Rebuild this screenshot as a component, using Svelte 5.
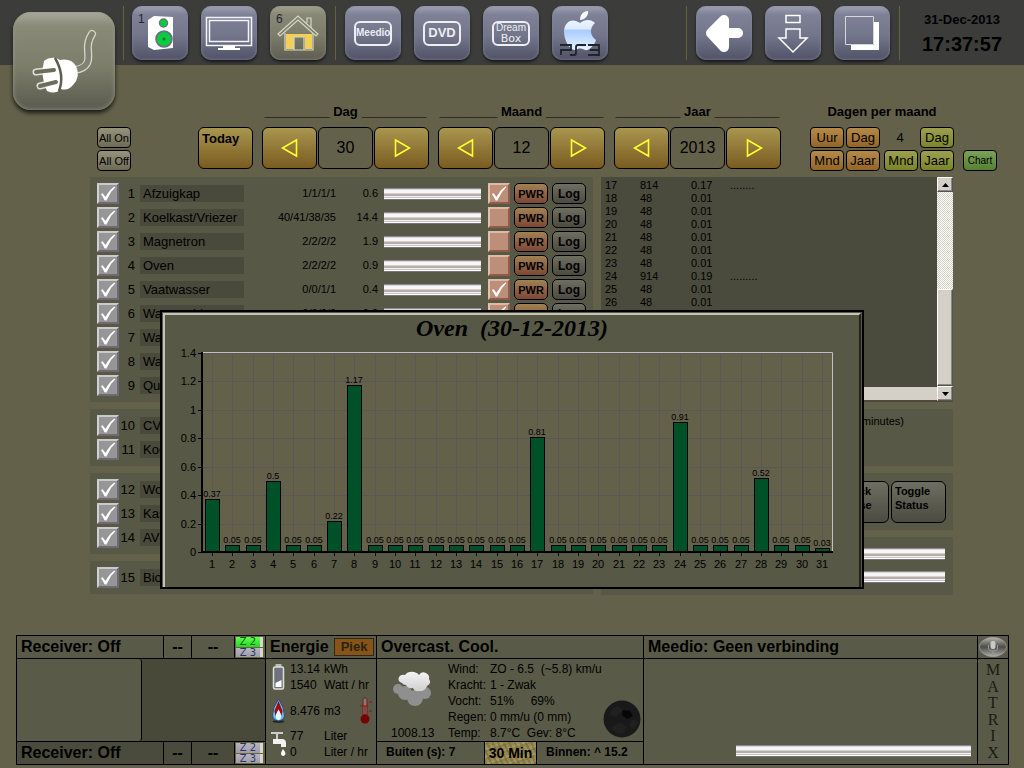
<script>
	const meters = [
		[
			{ id: 1, name: 'Afzuigkap', count: '1/1/1/1', value: '0.6', power: true },
			{ id: 2, name: 'Koelkast/Vriezer', count: '40/41/38/35', value: '14.4', power: false },
			{ id: 3, name: 'Magnetron', count: '2/2/2/2', value: '1.9', power: false },
			{ id: 4, name: 'Oven', count: '2/2/2/2', value: '0.9', power: false },
			{ id: 5, name: 'Vaatwasser', count: '0/0/1/1', value: '0.4', power: true },
			{ id: 6, name: 'Wasmachine', count: '0/0/0/0', value: '0.0', power: true },
			{ id: 7, name: 'Wand' },
			{ id: 8, name: 'Warm' },
			{ id: 9, name: 'Quad' }
		],
		[
			{ id: 10, name: 'CV' },
			{ id: 11, name: 'Kook' }
		],
		[
			{ id: 12, name: 'Wok' },
			{ id: 13, name: 'Kast' },
			{ id: 14, name: 'AV' }
		],
		[
			{ id: 15, name: 'Bios' }
		]
	]

	const log = [
		[17, 814, '0.17', '........'],
		[18, 48, '0.01', ''],
		[19, 48, '0.01', ''],
		[20, 48, '0.01', ''],
		[21, 48, '0.01', ''],
		[22, 48, '0.01', ''],
		[23, 48, '0.01', ''],
		[24, 914, '0.19', '.........'],
		[25, 48, '0.01', ''],
		[26, 48, '0.01', '']
	]

	const peaks = { 1: 0.37, 4: 0.5, 7: 0.22, 8: 1.17, 17: 0.81, 24: 0.91, 28: 0.52, 31: 0.03 }
	const bars = []
	for (let day = 1; day <= 31; day++) {
		bars.push({ day, value: peaks[day] ?? 0.05 })
	}
	const ticks = [0, 0.2, 0.4, 0.6, 0.8, 1, 1.2, 1.4]
	const x_of = (day) => Math.round(47 + (day - 1) * 20.33)
	const y_of = (value) => Math.round(211 - value * 142.5)

	const weather = [
		['Wind:', 'ZO - 6.5\u00a0 (~5.8) km/u'],
		['Kracht:', '1 - Zwak'],
		['Vocht:', '51%\u00a0\u00a0\u00a0\u00a0 69%'],
		['Regen:', '0 mm/u (0 mm)'],
		['Temp:', '8.7°C\u00a0 Gev: 8°C']
	]

	let date = $state([
		{ label: 'Dag', line: '_________', value: 30 },
		{ label: 'Maand', line: '________', value: 12 },
		{ label: 'Jaar', line: '_________', value: 2013 }
	])
</script>

{#snippet arrow(left)}
	<svg width="18" height="20" viewBox="0 0 18 20" fill="none" stroke="#ffff2e" stroke-width="1.6">
		{#if left}
		<path d="M15.5 2v16L1.5 10z" />
		{:else}
		<path d="M2.5 2v16l14-8z" />
		{/if}
	</svg>
{/snippet}

{#snippet zones(active)}
	<div class="zones">
		<button class="zone" class:active>Z 2</button>
		<button class="zone">Z 3</button>
	</div>
{/snippet}

<div class="page">
<header>
	<button class="plug" aria-label="Energie">
		<svg width="102" height="98" viewBox="0 0 102 98">
			<g fill="none" stroke-linecap="round" stroke-linejoin="round">
				<path d="M62 58C76 56 76 48 75 39C74 30 77 25 79 22" stroke="#d8d8cb" stroke-width="8" />
				<path d="M61 58C76 56 76 48 75 39C74 30 77 25 79 22" stroke="#828272" stroke-width="5.5" />
				<path d="M23 60l18-2M27 74l16-4" stroke="#e0e0d4" stroke-width="7" />
				<path d="M31 49Q36 45 43 46L47 48Q58 46 63 54Q68 65 60 73Q55 79 48 77Q42 83 34 79Q27 64 31 49z" fill="#fff" />
				<path d="M23 60l18-2M27 74l16-4" stroke="#6c6d5c" stroke-width="4" />
			</g>
			<path d="M42 46Q52 63 46 79" fill="none" stroke="#5d5e50" stroke-width="2.5" />
		</svg>
	</button>
	<nav class="group">
		<button class="tile" aria-label="Audio">
			<span class="count">1</span>
			<svg width="56" height="54" viewBox="0 0 56 54">
				<path d="M16 14l6-4 19 1v31l-19 2-6-3z" fill="#fff" />
				<circle cx="31.500" cy="17" r="4" fill="#00d13a" stroke="#6b7382" stroke-width="1.5" />
				<circle cx="32" cy="33" r="7.800" fill="#00d13a" stroke="#6b7382" stroke-width="2" />
				<circle cx="32" cy="33" r="1.500" fill="#456" />
			</svg>
		</button>
		<button class="tile" aria-label="TV">
			<svg width="56" height="54" viewBox="0 0 56 54">
				<g fill="none" stroke="#f4f4fa">
					<rect x="5.500" y="11.500" width="45" height="28" stroke-width="1.5" />
					<rect x="8.500" y="14.500" width="39" height="21" stroke-width="1.5" />
				</g>
				<path d="M22 40h12v2h5v2H17v-2h5z" fill="#fff" />
			</svg>
		</button>
		<button class="tile olive" aria-label="Huis">
			<span class="count">6</span>
			<svg width="56" height="54" viewBox="0 0 56 54">
				<path d="M16 28h26v15h-7V31h-11v12h-8z" fill="#f3cf59" />
				<g fill="none" stroke="#d7d7c5" stroke-width="1.2">
					<path d="M8 28L28 10l20 18-2 2L28 14 10 30z" />
					<path d="M37 17v-5h4v10M15 27v17h28V27M24 44V31h10v13" />
				</g>
			</svg>
		</button>
	</nav>
	<nav class="group">
		<button class="tile"><span class="plate">Meedio</span></button>
		<button class="tile"><span class="plate dvd">DVD</span></button>
		<button class="tile"><span class="plate dream">Dream<b>Box</b></span></button>
		<button class="tile" aria-label="PS3">
			<svg width="56" height="54" viewBox="0 0 56 54">
				<defs>
					<linearGradient id="apple" x1="0" y1="0" x2="0" y2="1">
						<stop offset="0" stop-color="#fff" />
						<stop offset=".45" stop-color="#dcebff" />
						<stop offset=".5" stop-color="#a9ccff" />
						<stop offset="1" stop-color="#e8f3ff" />
					</linearGradient>
				</defs>
				<path d="M28 14C28 8 32 5 36 5C37 9 33 14 28 14zM28 17C33 13 39 13 43 17C37 22 38 30 44 34C42 40 37 45 33 44C29 42 27 42 23 44C17 44 12 33 12 26C12 16 20 11 28 17z" fill="url(#apple)" />
				<path d="M8 39h11v5H9v5M34 39h-8q-2 0-2 2v6q0 2-2 2h-4M36 39h11v10H36M38 44h9" fill="none" stroke="#22242a" stroke-width="1.8" />
			</svg>
		</button>
	</nav>
	<nav class="group right">
		<button class="tile" aria-label="Terug">
			<svg width="56" height="54" viewBox="0 0 56 54" stroke="#fff" stroke-linecap="round" stroke-linejoin="round">
				<path d="M28 14L15 27l13 14z" fill="#fff" stroke-width="10" />
				<path d="M20 27h22" stroke-width="10" />
			</svg>
		</button>
		<button class="tile" aria-label="Omlaag">
			<svg width="56" height="54" viewBox="0 0 56 54" fill="none" stroke="#fff" stroke-width="1.5">
				<path d="M21 9.500h14v7H21zM21 23h14v9h7L28 46 14 32h7z" />
			</svg>
		</button>
		<button class="tile" aria-label="Vensters">
			<svg width="56" height="54" viewBox="0 0 56 54">
				<path d="M17 39h23V16h5v28H17z" fill="#fff" />
				<path d="M11.500 10.500h28v28h-28z" fill="none" stroke="#d5d5dc" />
			</svg>
		</button>
	</nav>
	<div class="clock">
		<div>31-Dec-2013</div>
		<div class="time">17:37:57</div>
	</div>
</header>

<section class="controls">
	<div class="pair">
		<button class="mini tiny">All On</button>
		<button class="mini tiny">All Off</button>
	</div>
	<button class="gold today">Today</button>
	{#each date as part}
	<div class="picker">
		<label for={part.label}>{part.line} {part.label} {part.line}</label>
		<div class="stepper">
			<button class="gold" aria-label="Vorige" onclick={() => part.value--}>{@render arrow(true)}</button>
			<input id={part.label} bind:value={part.value}>
			<button class="gold" aria-label="Volgende" onclick={() => part.value++}>{@render arrow(false)}</button>
		</div>
	</div>
	{/each}
	<div class="ranges">
		<div class="heading">Dagen per maand</div>
		<div class="range-grid">
			<button class="mini orange">Uur</button>
			<button class="mini orange">Dag</button>
			<span class="four">4</span>
			<button class="mini lime">Dag</button>
			<span></span>
			<button class="mini orange">Mnd</button>
			<button class="mini orange">Jaar</button>
			<button class="mini lime shift">Mnd</button>
			<button class="mini lime">Jaar</button>
			<button class="mini green">Chart</button>
		</div>
	</div>
</section>

<main>
	<div class="column">
		{#each meters as panel}
		<div class="panel list">
			{#each panel as meter}
			<div class="meter">
				<input type="checkbox" class="check" id="meter-{meter.id}" checked>
				<label for="meter-{meter.id}"><span class="number">{meter.id}</span><span class="name">{meter.name}</span></label>
				{#if meter.count}
				<span class="counts">{meter.count}</span>
				<span class="value">{meter.value}</span>
				<div class="tube"></div>
				<input type="checkbox" class="check pink" aria-label="Power {meter.name}" checked={meter.power}>
				<button class="mini pwr">PWR</button>
				<button class="mini log">Log</button>
				{/if}
			</div>
			{/each}
		</div>
		{/each}
	</div>
	<div class="column">
		<div class="panel history">
			<div class="view">
				<table>
				<tbody>
					{#each log as row}
					<tr>
						{#each row as cell}
						<td>{cell}</td>
						{/each}
					</tr>
					{/each}
				</tbody>
				</table>
				<div class="hbar"></div>
			</div>
			<div class="vbar">
				<button aria-label="Omhoog"><svg width="7" height="4"><path d="M0 4h7L3.500 0z" /></svg></button>
				<div class="thumb"></div>
				<button aria-label="Omlaag"><svg width="7" height="4"><path d="M0 0h7L3.500 4z" /></svg></button>
			</div>
		</div>
		<div class="panel note">(minutes)</div>
		<div class="panel actions">
			<button class="grey">Check<br>House</button>
			<button class="grey">Toggle<br>Status</button>
		</div>
		<div class="panel tubes">
			<div class="tube"></div>
			<div class="tube"></div>
		</div>
	</div>
</main>

<div class="dialog" role="dialog" aria-labelledby="chart-title">
	<div class="bevel">
		<h1 id="chart-title">Oven&nbsp; (30-12-2013)</h1>
		<svg class="chart" viewBox="0 0 694 246">
			<rect x="37" y="11" width="631" height="200" class="plot" />
			{#each ticks as tick}
			<path d="M37 {y_of(tick) + 0.5}H668" class="grid" />
			<path d="M33 {y_of(tick) + 0.5}H37" class="axis" />
			<text x="31" y={y_of(tick) + 4} text-anchor="end">{tick}</text>
			{/each}
			{#each bars as bar}
			<path d="M{x_of(bar.day) + 0.5} 11V211" class="grid" />
			<path d="M{x_of(bar.day) + 0.5} 211V215" class="axis" />
			{/each}
			<path d="M37 11.500H667.500V211" class="edge" />
			{#each bars as bar}
			<rect x={x_of(bar.day) - 6.5} y={y_of(bar.value) + 0.5} width="14" height={211 - y_of(bar.value)} class="bar" />
			<text x={x_of(bar.day)} y={y_of(bar.value) - 2} class="small" text-anchor="middle">{bar.value}</text>
			<text x={x_of(bar.day)} y="227" text-anchor="middle">{bar.day}</text>
			{/each}
			<path d="M37 11V211H668" class="axis thick" />
		</svg>
	</div>
</div>

<footer>
	<div class="receiver first">
		<span class="title">Receiver: Off</span><span class="dash">--</span><span class="dash wide">--</span>
		{@render zones(true)}
	</div>
	<div class="screens">
		<div class="near"></div>
	</div>
	<div class="receiver second">
		<span class="title">Receiver: Off</span><span class="dash">--</span><span class="dash wide">--</span>
		{@render zones(false)}
	</div>

	<div class="title energy-title">Energie <button class="piek">Piek</button></div>
	<div class="energy">
		<div class="usage">
			<svg width="12" height="26" viewBox="0 0 12 26">
				<path d="M3 0h6v3H3z" fill="#bbb" />
				<rect x="1" y="3" width="10" height="22" rx="1.500" fill="#70717f" stroke="#deded8" stroke-width="1.5" />
				<path d="M3 19l6-3v7H3z" fill="#fff" />
			</svg>
			<div>
				<p><span>13.14</span>kWh</p>
				<p><span>1540</span>Watt / hr</p>
			</div>
		</div>
		<div class="usage">
			<svg width="14" height="26" viewBox="0 0 14 26">
				<ellipse cx="7" cy="23.500" rx="6" ry="1.500" fill="#22261f" />
				<path d="M7 1Q13 10 13 17Q13 22 7 23Q1 22 1 17Q1 10 7 1z" fill="#68bfe8" stroke="#33427c" />
				<path d="M7 3L11 13 10 18 7 11 4 18 3 13z" fill="#a50608" />
				<path d="M7 12Q11 17 9 21Q7 23 5 21Q3 17 7 12z" fill="#e3f8ff" />
			</svg>
			<p><span>8.476</span>m3</p>
			<svg class="thermo" width="12" height="27" viewBox="0 0 12 27">
				<path d="M3 2q2-3 4 0v16H3z" fill="#8d7670" stroke="#6d2020" />
				<path d="M5 9v12M0 9h8M9 5h3M9 14h3" stroke="#8f1515" />
				<circle cx="5" cy="22" r="4.500" fill="#780000" />
			</svg>
		</div>
		<div class="usage">
			<svg width="15" height="26" viewBox="0 0 15 26">
				<path d="M0 2h12M6 2v6" stroke="#ccc" stroke-width="2" />
				<path d="M2 8h9q4 0 4 4v4h-5v-3H2z" fill="#f2f2ee" />
				<path d="M12 18q5 6 0 7q-4-1 0-7z" fill="#fff" />
			</svg>
			<div>
				<p><span>77</span>Liter</p>
				<p><span>0</span>Liter / hr</p>
			</div>
		</div>
	</div>

	<div class="title weather-title">Overcast. Cool.</div>
	<div class="weather">
		<div class="sky">
			<svg width="42" height="38" viewBox="0 0 42 38">
				<defs>
					<linearGradient id="cloud" x1="0" y1="0" x2="0" y2="1">
						<stop offset="0" stop-color="#f4f4f4" />
						<stop offset="1" stop-color="#cfcfcf" />
					</linearGradient>
				</defs>
				<g fill="#8f8f8f">
					<circle cx="7" cy="18" r="5" /><circle cx="14" cy="22" r="7" />
					<circle cx="24" cy="27" r="8" /><circle cx="34" cy="22" r="6" />
				</g>
				<path d="M11 12Q6 10 8 6Q10 3 14 4Q17 0 23 1Q27 2 28 4Q30 0 35 2Q39 4 38 8Q41 12 36 15Q34 21 28 20Q24 21 22 17Q17 18 15 14Q12 14 11 12z" fill="url(#cloud)" />
			</svg>
			<span>1008.13</span>
		</div>
		<dl>
			{#each weather as [label, text]}
			<dt>{label}</dt>
			<dd>{text}</dd>
			{/each}
		</dl>
		<svg class="moon" width="38" height="38" viewBox="0 0 38 38">
			<circle cx="19" cy="19" r="18.500" fill="#191919" />
			<path d="M6 15q3-8 9-9l5 4-7 7zM8 28l9-6 7 5-4 7q-8 0-12-6zM29 19l6 3-4 8-5-4z" fill="#202020" />
			<path d="M20 10l7 1 3 5-6 3-5-4z" fill="#060606" />
		</svg>
	</div>
	<div class="temps">
		<span>Buiten (s): 7</span>
		<button>30 Min</button>
		<span>Binnen: ^ 15.2</span>
	</div>

	<div class="title player-title">Meedio: Geen verbinding</div>
	<div class="player"><div class="tube"></div></div>

	<button class="mic" aria-label="Microfoon">
		<svg width="28" height="20" viewBox="0 0 28 20">
			<defs>
				<linearGradient id="mic" x1="0" y1="0" x2="0" y2="1">
					<stop offset="0" stop-color="#b5b5ad" />
					<stop offset=".5" stop-color="#4c4c48" />
					<stop offset="1" stop-color="#b0b0a8" />
				</linearGradient>
			</defs>
			<ellipse cx="14" cy="10" rx="13.500" ry="9.700" fill="url(#mic)" stroke="#aaa" stroke-width=".6" />
			<rect x="11.500" y="4" width="5" height="8" rx="2" fill="#c9c9c5" />
			<path d="M9.500 8v3q0 3 4.500 3t4.500-3V8M14 14v3" fill="none" stroke="#999" />
		</svg>
	</button>
	<div class="matrix">
		{#each 'MATRIX' as letter}
		<span>{letter}</span>
		{/each}
	</div>
</footer>
</div>

<style>
:global(body) {
	margin: 0;
	background: #64614b;
}
* {
	box-sizing: border-box;
}
.page {
	position: relative;
	min-height: 100vh;
	display: flex;
	flex-direction: column;
	background: #64614b;
	color: #000;
	font: 13px/16px "Liberation Sans", Arial, sans-serif;
}
button, input {
	font: inherit;
	color: inherit;
	padding: 0;
	margin: 0;
	border: 0;
	flex-shrink: 0;
}
button {
	cursor: pointer;
}
svg {
	display: block;
}
p {
	margin: 0;
}

header {
	display: flex;
	align-items: flex-start;
	height: 65px;
	padding-left: 13px;
	background: #3c3d3b;
}
.plug {
	width: 102px;
	height: 98px;
	margin: 12px 8px 0 0;
	border-radius: 18px;
	background: linear-gradient(#acac9d, #898a78 14%, #7c7d6b 55%, #5a5b4e);
	box-shadow: 0 3px 4px #1c1c14, inset 0 0 4px #96978a;
}
.group {
	display: flex;
	gap: 13px;
	height: 54px;
	margin-top: 6px;
	padding: 0 9px 0 8px;
	border-left: 1px solid #67623a;
}
.group + .group {
	padding-left: 9px;
}
.group.right {
	margin-left: auto;
	border-right: 1px solid #67623a;
}
.tile {
	position: relative;
	display: flex;
	align-items: center;
	justify-content: center;
	width: 56px;
	height: 54px;
	border-radius: 10px;
	background: linear-gradient(#a0a2b4, #7f8196 16%, #73758a 55%, #505267);
	box-shadow: 0 2px 3px #18181c, inset 0 0 3px #85879c;
}
.tile.olive {
	background: linear-gradient(#a2a28f, #878875 16%, #7b7c69 55%, #5d5e50);
	box-shadow: 0 2px 3px #18181c, inset 0 0 3px #8e8f7d;
}
.count {
	position: absolute;
	left: 6px;
	top: 5px;
	font-size: 12px;
	color: #26262c;
}
.plate {
	width: 38px;
	height: 25px;
	border: 2px solid #ededf3;
	border-radius: 6px;
	color: #ededf3;
	font: bold 10px/20px "Liberation Sans", Arial, sans-serif;
}
.plate.dvd {
	font-size: 13px;
}
.plate.dream {
	display: grid;
	align-content: center;
	font: 10px/10px "Liberation Sans", Arial, sans-serif;
}
.plate b {
	font: 11px/11px "DejaVu Sans", sans-serif;
}
.clock {
	width: 124px;
	padding-top: 12px;
	text-align: center;
	font-weight: bold;
}
.time {
	font-size: 20px;
	line-height: 32px;
}

.controls {
	display: flex;
	align-items: flex-end;
	margin-top: 38px;
	padding: 0 27px 0 97px;
	height: 68px;
	gap: 9px;
}
.pair {
	display: grid;
	gap: 2px;
	margin-right: 58px;
}
.mini {
	width: 34px;
	height: 21px;
	border: 1px solid #000;
	border-radius: 4px;
	background: linear-gradient(#96937b, #6d6b55);
	font-size: 13px;
	line-height: 16px;
	white-space: nowrap;
}
.mini.tiny {
	font-size: 11px;
}
.mini.orange {
	background: linear-gradient(#b48a4b, #936526);
}
.mini.lime {
	background: linear-gradient(#9ca04e, #7b8529);
}
.mini.green {
	margin-left: 7px;
	background: linear-gradient(#7ba259, #558132);
	font-size: 10px;
}
.gold {
	display: grid;
	place-items: center;
	width: 55px;
	height: 42px;
	border: 1px solid #000;
	border-radius: 6px;
	background: linear-gradient(#a9964f, #7a5b20);
}
.gold.today {
	place-items: start;
	padding: 3px;
	font-weight: bold;
}
.controls > .today, .stepper {
	margin-bottom: 2px;
}
.picker label, .heading {
	display: block;
	text-align: center;
	white-space: nowrap;
	font-weight: bold;
	margin-bottom: 7px;
}
.stepper {
	display: flex;
	gap: 1px;
}
.stepper input {
	width: 55px;
	height: 42px;
	border: 1px solid #000;
	border-radius: 6px;
	background: none;
	text-align: center;
	font-size: 16px;
}
.ranges {
	margin-left: auto;
}
.heading {
	width: 144px;
}
.range-grid {
	display: grid;
	grid-template-columns: 34px 34px 36px 34px 41px;
	gap: 2px;
}
.four {
	text-align: center;
	line-height: 21px;
}
.shift {
	justify-self: end;
}

main {
	display: grid;
	grid-template-columns: 503fr 352fr;
	gap: 8px;
	margin: 6px 71px 0 90px;
}
.column {
	display: flex;
	flex-direction: column;
	gap: 7px;
}
.panel {
	background: #575845;
}
.list {
	padding: 6px 7px 3px;
}
.meter {
	display: flex;
	align-items: flex-start;
	height: 24px;
}
.meter label {
	display: flex;
	margin-right: auto;
}
.number {
	width: 16px;
	text-align: right;
	line-height: 21px;
}
.name {
	width: 104px;
	height: 17px;
	margin: 2px 0 0 5px;
	padding-left: 3px;
	background: #494a3b;
	line-height: 17px;
}
.check {
	appearance: none;
	display: grid;
	place-items: center;
	width: 22px;
	height: 21px;
	border: 2px solid;
	border-color: #c9c9c9 #6c6c70 #6c6c70 #d0d0d0;
	background: #969698;
}
.check:checked::before {
	content: "";
	width: 16px;
	height: 15px;
	background: #fff;
	clip-path: polygon(6% 54%, 17% 48%, 34% 74%, 62% 28%, 90% 4%, 96% 9%, 68% 42%, 40% 96%, 30% 96%);
}
.check.pink {
	border-color: #deb9a8 #8e5d48 #8e5d48 #e2bfae;
	background: #bd8e78;
}
.counts, .value {
	font-size: 11px;
	line-height: 20px;
}
.value {
	width: 42px;
	text-align: right;
}
.tube {
	width: 97px;
	height: 12px;
	background: linear-gradient(#8b8991 0 1px, #d9d5db 1px 2px, #f8f5f7 2px 5px, #d5cfce 5px 6px, #b4aea8 6px 8px, #f2eef0 8px 9px, #c9c4c2 9px 10px, #fff 10px 11px, #77757c 11px);
}
.meter .tube {
	margin: 5px 7px 0 6px;
}
.meter .mini {
	margin: 0 0 0 4px;
	border-radius: 5px;
	font-weight: bold;
}
.mini.pwr {
	background: linear-gradient(#a18154, #7d4735);
	font-size: 11px;
}
.mini.log {
	background: linear-gradient(#6e6e62, #4b4b41);
	font-size: 12px;
}

.history {
	display: flex;
	height: 225px;
	background: #4a4b3c;
}
.view {
	flex: 1;
	display: flex;
	flex-direction: column;
	justify-content: space-between;
	padding: 2px 0 2px;
}
.hbar {
	height: 13px;
	background: #d4d0c8;
}
table {
	border-collapse: collapse;
	table-layout: fixed;
	width: 100%;
	font-size: 11px;
	line-height: 13px;
}
td {
	padding: 0 0 0 4px;
	height: 13px;
}
td:nth-child(1) {
	width: 35px;
}
td:nth-child(2) {
	width: 51px;
}
td:nth-child(3) {
	width: 39px;
}
.vbar {
	display: flex;
	flex-direction: column;
	width: 16px;
	margin-bottom: 1px;
	background: repeating-conic-gradient(#fff 0 25%, #d4d0c8 0 50%) 0 0 / 2px 2px;
}
.vbar button, .thumb {
	border: 1px solid;
	border-color: #fff #55554f #55554f #fff;
	background: #d4d0c8;
	box-shadow: inset -1px -1px #888;
}
.vbar button {
	display: grid;
	place-items: center;
	height: 15px;
}
.thumb {
	height: 97px;
	margin-top: auto;
}
.note {
	height: 57px;
	padding: 4px 49px;
	text-align: right;
	font-size: 11px;
}
.actions {
	display: flex;
	justify-content: flex-end;
	gap: 2px;
	height: 57px;
	padding: 8px 7px;
}
.grey {
	width: 55px;
	height: 42px;
	padding: 2px 3px 10px;
	border: 1px solid #000;
	border-radius: 6px;
	background: linear-gradient(#6e6e62, #4b4b41);
	font: bold 11px/14px "Liberation Sans", Arial, sans-serif;
	text-align: left;
}
.tubes {
	display: grid;
	gap: 11px;
	padding: 11px 8px 12px 15px;
}
.tubes .tube {
	width: 100%;
}

.dialog {
	position: absolute;
	top: 310px;
	left: 0;
	right: 0;
	width: 704px;
	margin: 0 auto;
	padding: 1px 1px 0;
	border: 2px solid #000;
	background: #575845;
}
.bevel {
	border: 2px solid;
	border-color: #c4c4b6 #22221a transparent #c4c4b6;
	border-bottom: 0;
}
h1 {
	margin: 0;
	text-align: center;
	font: italic bold 24px/26px "Liberation Serif", "Times New Roman", serif;
}
.chart {
	width: 100%;
	font-size: 11px;
}
.small {
	font-size: 9px;
}
.plot {
	fill: #64614b;
}
.grid {
	stroke: #5a5758;
}
.axis {
	fill: none;
	stroke: #000;
}
.thick {
	stroke-width: 2px;
}
.edge {
	fill: none;
	stroke: #c0c0c0;
}
.bar {
	fill: #005028;
	stroke: #000;
}

footer {
	display: grid;
	grid-template-columns: 248px 110px 266px 1fr 30px;
	grid-template-rows: 22px 82px 22px;
	grid-template-areas:
		"first energy-title weather-title player-title mic"
		"screens energy weather player matrix"
		"second energy temps player matrix";
	gap: 1px;
	margin: auto 15px 3px 16px;
	padding: 1px;
	background: #000;
	font-size: 12px;
}
footer > * {
	background: #5a5a48;
}
.title {
	padding-left: 4px;
	font-size: 16px;
	font-weight: bold;
	line-height: 21px;
	white-space: nowrap;
}
.receiver {
	display: flex;
}
.receiver .title {
	flex: 1;
}
.first {
	grid-area: first;
}
.second {
	grid-area: second;
	background: #4a4b3c;
}
.dash {
	width: 28px;
	border-left: 1px solid #000;
	text-align: center;
	font-size: 16px;
	font-weight: bold;
	line-height: 22px;
}
.dash.wide {
	width: 43px;
}
.zones {
	display: grid;
	gap: 1px;
	width: 31px;
	padding: 1px 2px 1px 1px;
	border-left: 1px solid #000;
	background: #6b6436;
}
.zone {
	border-right: 3px solid #d5d5dc;
	background: linear-gradient(#b5b5c0, #9d9da9);
	color: #303066;
	font: 10px/9px "DejaVu Sans", sans-serif;
}
.zone.active {
	background: linear-gradient(#5dff55, #28d51f);
	color: #075c07;
}
.energy-title {
	grid-area: energy-title;
	display: flex;
	justify-content: space-between;
	padding-right: 2px;
}
.weather-title {
	grid-area: weather-title;
}
.player-title {
	grid-area: player-title;
}
.piek {
	width: 40px;
	height: 18px;
	margin-top: 2px;
	border: 1px solid #2c2a20;
	background: #885315;
	color: #2a2414;
	font: bold 13px/16px "Liberation Sans", Arial, sans-serif;
}
.mic {
	grid-area: mic;
	display: grid;
	place-items: center;
}
.screens {
	grid-area: screens;
	background: #484939;
}
.near {
	width: 125px;
	height: 100%;
	border-right: 1px solid #000;
	border-radius: 0 3px 3px 0;
	background: #5a5a48;
}
.energy {
	grid-area: energy;
	display: flex;
	flex-direction: column;
	justify-content: space-between;
	padding: 2px 4px 4px 5px;
}
.usage {
	display: flex;
	align-items: center;
	white-space: nowrap;
}
.usage > svg:first-child {
	width: 15px;
	margin-right: 4px;
}
.usage span {
	display: inline-block;
	width: 34px;
}
.thermo {
	margin-left: auto;
}
.weather {
	grid-area: weather;
	display: flex;
	padding: 2px 2px 0 14px;
	white-space: nowrap;
}
.sky {
	display: flex;
	flex-direction: column;
	justify-content: space-between;
	width: 57px;
	padding-top: 10px;
}
dl {
	display: grid;
	grid-template-columns: 42px auto;
	align-content: start;
	margin: 0;
}
dd {
	margin: 0;
}
.moon {
	align-self: flex-end;
	margin: 0 0 3px auto;
}
.temps {
	grid-area: temps;
	display: grid;
	grid-template-columns: 107px 53px 1fr;
	font-size: 12px;
	font-weight: bold;
	line-height: 21px;
}
.temps span {
	padding-left: 9px;
}
.temps button {
	border: solid #000;
	border-width: 0 1px;
	background:
		repeating-linear-gradient(65deg, #5c4f2055 0 2px, transparent 2px 5px),
		repeating-linear-gradient(-20deg, #8c7f48 0 2px, #a29660 2px 4px, #978a52 4px 7px);
	font-size: 14px;
}
.player {
	grid-area: player;
	display: flex;
	align-items: flex-end;
	padding: 7px 6px;
}
.player .tube {
	width: 235px;
	margin-left: auto;
}
.matrix {
	grid-area: matrix;
	display: grid;
	place-items: center;
	padding: 3px 0;
	color: #1a1a14;
	font: 16px/16px "Liberation Serif", "Times New Roman", serif;
}
</style>
